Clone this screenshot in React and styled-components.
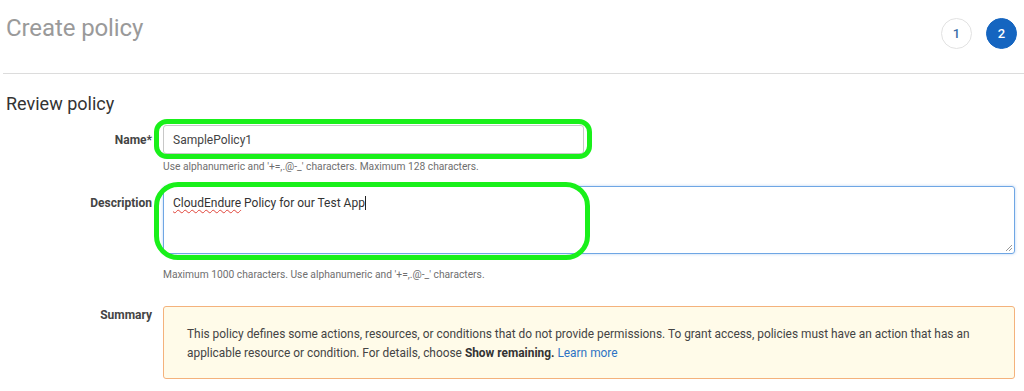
import React from 'react';
import styled, { createGlobalStyle } from 'styled-components';

const GlobalStyle = createGlobalStyle`
    body {
        margin: 0;
        background: #fff;
        font-family: Roboto, "Liberation Sans", Arial, sans-serif;
    }
`;

const Page = styled.div`
    width: 1024px;
    height: 391px;
    overflow: hidden;
    box-sizing: border-box;
`;

const Header = styled.div`
    display: flex;
    justify-content: space-between;
    align-items: flex-start;
    height: 73px;
    padding: 0 7px 0 3px;
    margin-left: 3px;
    border-bottom: 1px solid #dcdcdc;

    h1 {
        margin: 14px 0 0;
        font-size: 24px;
        font-weight: 400;
        color: #9a9a9a;
        letter-spacing: -0.1px;
    }
`;

const Steps = styled.div`
    display: flex;
    gap: 14px;
    margin-top: 18px;
`;

const Step = styled.div`
    width: 31px;
    height: 31px;
    border-radius: 50%;
    box-sizing: border-box;
    display: flex;
    align-items: center;
    justify-content: center;
    font-size: 13px;
    font-weight: 500;
    background: ${p => (p.$active ? '#1565c0' : '#fff')};
    color: ${p => (p.$active ? '#fff' : '#3b6fa8')};
    border: 1px solid ${p => (p.$active ? '#1565c0' : '#e2e2e2')};
`;

const Body = styled.div`
    padding: 0 9px 0 6px;

    h2 {
        margin: 19px 0 0;
        font-size: 18px;
        font-weight: 400;
        color: #333;
    }
`;

const Form = styled.div`
    display: grid;
    grid-template-columns: 146px 1fr;
    column-gap: 11px;
    margin-top: 11px;
`;

const Label = styled.div`
    text-align: right;
    font-size: 12px;
    font-weight: 700;
    color: #444;
    padding-top: ${p => p.$top || 9}px;
`;

const Field = styled.div`
    position: relative;
    padding-bottom: ${p => p.$bottom || 0}px;
`;

const Input = styled.div`
    width: 421px;
    height: 29px;
    box-sizing: border-box;
    border: 1px solid #c8c8c8;
    border-radius: 3px;
    padding: 7px 9px;
    font-size: 12px;
    color: #444;
`;

const TextArea = styled.div`
    position: relative;
    height: 68px;
    box-sizing: border-box;
    border: 1px solid #6fa6e4;
    box-shadow: 0 0 3px rgba(90, 150, 230, 0.45);
    border-radius: 3px;
    padding: 9px 9px;
    font-size: 12px;
    color: #333;

    .typo {
        text-decoration: underline wavy #e0443a;
        text-decoration-thickness: 1px;
        text-underline-offset: 2px;
    }

    .caret {
        display: inline-block;
        width: 1px;
        height: 14px;
        background: #222;
        vertical-align: -3px;
    }
`;

const Grip = styled.svg`
    position: absolute;
    right: 1px;
    bottom: 1px;
`;

const Hint = styled.div`
    margin-top: ${p => p.$top || 6}px;
    font-size: 10.25px;
    color: #6f6f6f;
`;

const Highlight = styled.div`
    position: absolute;
    left: -9px;
    top: ${p => p.$top}px;
    width: ${p => p.$width}px;
    height: ${p => p.$height}px;
    border: 5px solid #19f01a;
    border-radius: ${p => p.$radius}px;
    box-sizing: border-box;
    pointer-events: none;
`;

const Notice = styled.div`
    height: 73px;
    box-sizing: border-box;
    background: #fffbe9;
    border: 1px solid #f4b27c;
    border-radius: 3px;
    padding: 18px 22px 0 23px;
    font-size: 11.9px;
    line-height: 19px;
    color: #444;

    b {
        color: #333;
    }

    a {
        color: #2e73c4;
        text-decoration: none;
    }
`;

const App = () => {
    return (
        <Page>
            <GlobalStyle />
            <Header>
                <h1>Create policy</h1>
                <Steps>
                    <Step>1</Step>
                    <Step $active>2</Step>
                </Steps>
            </Header>
            <Body>
                <h2>Review policy</h2>
                <Form>
                    <Label $top={8}>Name*</Label>
                    <Field $bottom={13}>
                        <Input>SamplePolicy1</Input>
                        <Hint>Use alphanumeric and '+=,.@-_' characters. Maximum 128 characters.</Hint>
                        <Highlight $top={-6} $width={438} $height={40} $radius={13} />
                    </Field>

                    <Label $top={10}>Description</Label>
                    <Field $bottom={25}>
                        <TextArea>
                            <span className="typo">CloudEndure</span> Policy for our Test App<span className="caret" />
                            <Grip width="9" height="9" viewBox="0 0 9 9">
                                <path d="M8 2 L2 8 M8 5 L5 8" stroke="#999" strokeWidth="1" />
                            </Grip>
                        </TextArea>
                        <Hint $top={14}>Maximum 1000 characters. Use alphanumeric and '+=,.@-_' characters.</Hint>
                        <Highlight $top={-4} $width={436} $height={78} $radius={24} />
                    </Field>

                    <Label $top={2}>Summary</Label>
                    <Field>
                        <Notice>
                            This policy defines some actions, resources, or conditions that do not provide permissions. To grant access, policies must have an action that has an applicable resource or condition. For details, choose <b>Show remaining.</b> <a href="#">Learn more</a>
                        </Notice>
                    </Field>
                </Form>
            </Body>
        </Page>
    );
};

export default App;
